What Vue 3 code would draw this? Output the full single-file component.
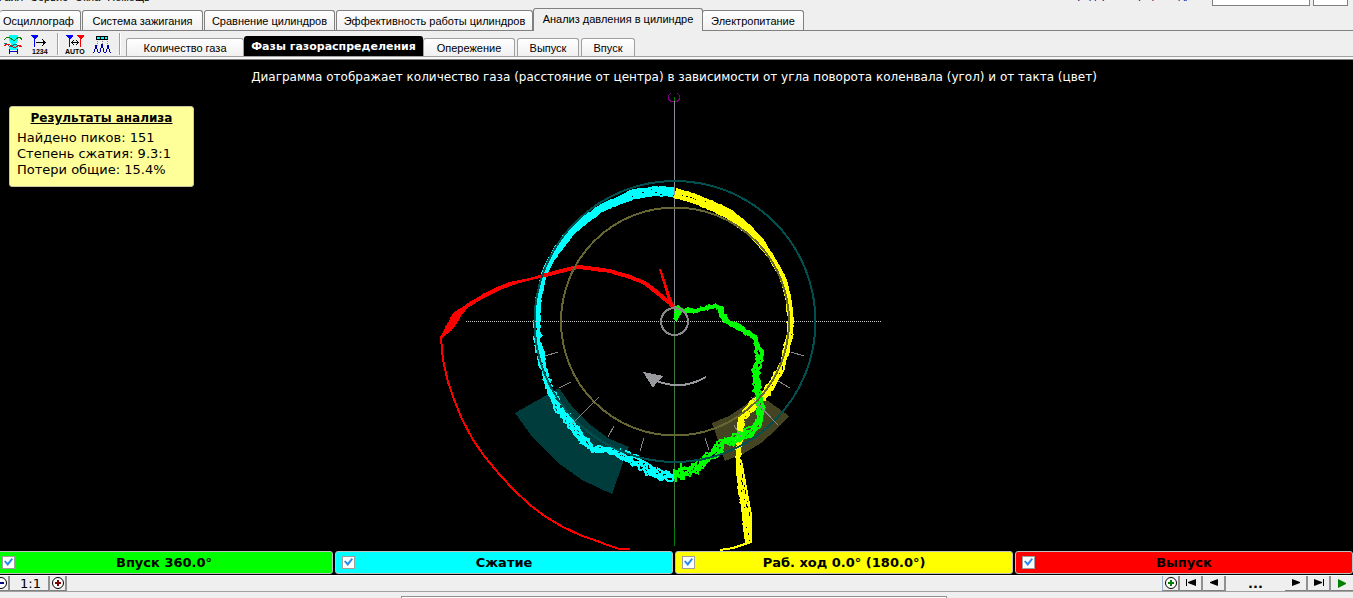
<script setup>
import { ref } from 'vue'

const mainTabs = ['Осциллограф', 'Система зажигания', 'Сравнение цилиндров', 'Эффективность работы цилиндров', 'Анализ давления в цилиндре', 'Электропитание']
const mainWidths = ['w82', 'w121', 'w131', 'w196', 'w170', 'w101']
const activeMain = ref(4)

const subTabs = ['Количество газа', 'Фазы газораспределения', 'Опережение', 'Выпуск', 'Впуск']
const subWidths = ['s118', 's179', 's92', 's62', 's53']
const activeSub = ref(1)

const strokes = ref([
  { id: 'intake', label: 'Впуск 360.0°', on: true },
  { id: 'compression', label: 'Сжатие', on: true },
  { id: 'power', label: 'Раб. ход 0.0° (180.0°)', on: true },
  { id: 'exhaust', label: 'Выпуск', on: true },
])

// Mean curve of each stroke: x, y and half-width of the bundle of cycles
const curves = {
  compression: [[674, 192, 5], [655, 191, 5], [635, 194, 5], [617, 201, 4], [600, 209, 4], [585, 220, 4], [570, 233, 4], [557, 250, 4], [549, 263, 3], [543, 277, 3], [539, 295, 3], [537, 320, 3], [538, 342, 3], [541, 357, 3], [545, 373, 3], [551, 392, 3], [558, 407, 4], [570, 422, 4], [581, 438, 4], [592, 449, 3], [607, 450, 3], [627, 457, 4], [643, 465, 5], [657, 475, 5], [674, 477, 4]],
  power: [[675, 193, 5], [693, 198, 5], [710, 205, 5], [727, 213, 5], [743, 225, 5], [760, 241, 4], [773, 260, 3], [783, 278, 3], [788, 297, 3], [791, 320, 3], [789, 340, 3], [784, 360, 3], [775, 380, 4], [765, 395, 4], [753, 405, 4], [742, 418, 3], [739, 440, 3], [738, 463, 2], [741, 487, 3], [746, 517, 4], [748, 542, 3]],
  intake: [[676, 320, 1], [678, 309, 2], [685, 310, 2], [693, 311, 1], [715, 306, 1], [720, 308, 2], [722, 315, 2], [728, 322, 2], [740, 328, 2], [754, 337, 2], [758, 345, 3], [760, 357, 4], [756, 370, 3], [757, 390, 3], [761, 407, 3], [759, 423, 4], [750, 432, 4], [738, 438, 4], [723, 443, 4], [712, 455, 4], [703, 463, 4], [692, 470, 5], [682, 472, 5], [676, 477, 6]],
  exhaust: [[674, 307, 2], [665, 299, 2], [655, 291, 2], [645, 283, 2], [630, 277, 2], [610, 271, 2], [595, 269, 2], [578, 267, 2], [565, 270, 2], [550, 274, 2], [530, 279, 1], [510, 284, 2], [500, 288, 2], [485, 295, 2], [467, 306, 2], [457, 315, 4], [449, 328, 4], [441, 338, 0]],
}
const noise = { compression: 1.9, power: 1.4, intake: 2, exhaust: 0.4 }

function bundle(name) {
  let seed = 17
  const rnd = () => ((seed = (seed * 16807) % 2147483647) / 2147483647) * 2 - 1
  const pts = curves[name]
  return [-1, -0.6, -0.2, 0.3, 0.65, 1].map((k) => {
    const out = []
    for (let i = 0; i < pts.length - 1; i++) {
      const [x1, y1, a] = pts[i]
      const [x2, y2, b] = pts[i + 1]
      const len = Math.hypot(x2 - x1, y2 - y1)
      const n = Math.max(1, Math.round(len / 3))
      for (let j = 0; j < n; j++) {
        const t = j / n
        const w = Math.max(0, a + (b - a) * t - 1)
        const smooth = y1 < 300 && name !== 'intake' ? 0.3 : 1
        const rough = noise[name] * smooth * (w > 2.5 && y1 > 430 ? 1.4 : 1)
        const d = w * k + rnd() * rough
        out.push(`${(x1 + (x2 - x1) * t - ((y2 - y1) / len) * d).toFixed(1)},${(y1 + (y2 - y1) * t + ((x2 - x1) / len) * d).toFixed(1)}`)
      }
    }
    const last = pts[pts.length - 1]
    out.push(`${last[0]},${last[1] + (last[2] - 1) * k}`)
    return out.join(' ')
  })
}
const bundles = Object.keys(curves).map((name) => ({ name, lines: bundle(name) }))
const isOn = (id) => strokes.value.find((s) => s.id === id).on
</script>

<template>
  <div class="app">
    <header class="menu">
      <nav class="menu-items">
        <a href="#">Файл</a><a href="#">Сервис</a><a href="#">Окна</a><a href="#">Помощь</a>
      </nav>
      <span class="menu-note">предпросмотр цилиндр</span>
      <input class="field wide" aria-label="Параметр" />
      <input class="field small" aria-label="Номер" />
    </header>

    <nav class="tabs">
      <button v-for="(t, i) in mainTabs" :key="t" :class="['tab', mainWidths[i], { active: i === activeMain }]" @click="activeMain = i">{{ t }}</button>
    </nav>

    <div class="toolbar">
      <button class="tool" aria-label="Фазы">
        <svg width="20" height="20" viewBox="0 0 20 20" shape-rendering="crispEdges" fill="none">
          <path d="M6 0h9v5l-2 4 2 3v3H6v-3l2-3-2-4z" fill="#0ff" />
          <path d="M1 5l3-3h2l4 3h2l4-3h1l2 3" stroke="#008000" />
          <path d="M1 8h2l3 3h3l3-2 4 2h3" stroke="#008080" />
          <path d="M1 11l3-2 3 1 3 2h3l3-2 3 2" stroke="red" />
          <path d="M6 16.500h9M6.500 14v5M14.500 14v5" stroke="#00c" />
        </svg>
      </button>
      <button class="tool" aria-label="Нумерация">
        <svg width="20" height="20" viewBox="0 0 20 20" shape-rendering="crispEdges">
          <path d="M1 0h7v1L5 4v8H4V4L1 1z" fill="#00f" />
          <path d="M6 7.500h9M12 4l3 3.500-3 3.500" stroke="#000" fill="none" />
          <text x="2" y="19" class="glyph">1234</text>
        </svg>
      </button>
      <span class="sep"></span>
      <button class="tool" aria-label="Авто">
        <svg width="20" height="20" viewBox="0 0 20 20" shape-rendering="crispEdges">
          <path d="M1 0h7v1L5 4v8H4V4L1 1z" fill="#00f" />
          <path d="M12 0h7v1l-3 3v8h-1V4l-3-3z" fill="red" />
          <path d="M7 7.500h6M9 5L6.500 7.500 9 10M11 5l2.500 2.500L11 10" stroke="#000" fill="none" />
          <text x="0" y="19" class="glyph">AUTO</text>
        </svg>
      </button>
      <button class="tool" aria-label="Пики">
        <svg width="20" height="20" viewBox="0 0 20 20" shape-rendering="crispEdges" fill="none">
          <path d="M4.500 1.500h11v3h-11z" fill="#0ff" stroke="#000" />
          <path d="M8.500 2v3M12.500 2v3" stroke="#000" />
          <path d="M5.500 6v6M10.500 6v6M15.500 6v6" stroke="#888" stroke-dasharray="1 1" />
          <path d="M1 17h1l1-3 1-4 1 4 1 3h2l1-4 1-4 1 4 1 4h2l1-3 1-4 1 4 1 3h1" stroke="#00a" />
        </svg>
      </button>
      <span class="sep"></span>
      <nav class="subtabs">
        <button v-for="(t, i) in subTabs" :key="t" :class="['subtab', subWidths[i], { active: i === activeSub }]" @click="activeSub = i">{{ t }}</button>
      </nav>
    </div>
    <div class="edge"></div>

    <main class="stage">
      <h1 class="title">Диаграмма отображает количество газа (расстояние от центра) в зависимости от угла поворота коленвала (угол) и от такта (цвет)</h1>
      <section class="results">
        <h2>Результаты анализа</h2>
        <p>Найдено пиков: 151</p>
        <p>Степень сжатия: 9.3:1</p>
        <p>Потери общие: 15.4%</p>
      </section>

      <svg class="chart" viewBox="0 60 1353 491" role="img" aria-label="Диаграмма фаз газораспределения" shape-rendering="crispEdges" fill="none">
        <path d="M559 388L515 413 533 438 557 462 582 480 612 494 624 460 629 447 608 438 588 423 573 408z" fill="#003c3c" />
        <path d="M757 393L789 416 776 430 761 443 743 454 725 461 712 423 729 416 744 406z" fill="#444422" />

        <path d="M674.500 100V320" stroke="#8c8c96" />
        <path d="M674.500 321V528" stroke="#3c783c" />
        <path d="M674.500 528V546M674.500 97v4" stroke="#008000" />
        <path d="M466 321.500H882" stroke="#c8c8c8" stroke-dasharray="1 1" />
        <path d="M670.500 93l-2 3v3l2 2h3M677.500 93l2 3v3l-2 2h-3" stroke="#800080" />

        <template v-for="b in bundles" :key="b.name">
          <g v-if="isOn(b.name)" :class="['trace', b.name]">
            <polyline v-for="(l, i) in b.lines" :key="i" :points="l" />
          </g>
        </template>
        <path v-if="isOn('power')" d="M737 460L746 543M741 460L751 515 751 542 742 545 733 548 720 550" stroke="#ff0" stroke-width="2" />
        <path v-if="isOn('exhaust')" d="M660 269L667 290 673 306M660 269L670 303M441 338L443 360 448 382 455 402 462 419 473 440 485 457 500 475 514 490 530 505 546 517 563 527 580 535 597 541 610 546 620 549H630" stroke="red" stroke-width="2" />
        <path v-if="isOn('intake')" d="M675 320L676 307 679 308 677 318 682 311M681 472V462" stroke="#0f0" stroke-width="2" />

        <circle cx="675" cy="321.500" r="140.500" stroke="#005050" stroke-width="2" />
        <circle cx="675" cy="321.500" r="114" stroke="#666633" stroke-width="2" />
        <circle cx="674.500" cy="321.500" r="13.500" stroke="#888" stroke-width="2" />
        <path d="M545 356L558 352M559 388L571 382M572 424L599 397M608 437L614 426M640 451L644 438M791 352L804 356M778 381L790 388M751 397L778 425M734 425L741 437M705 438L709 450" stroke="#888" />
        <path d="M643 372L663 376 658 381 653 388z" fill="#999a9e" />
        <path d="M657 381Q682 391 706 377" stroke="#999a9e" stroke-width="2" />
      </svg>
    </main>

    <div class="legend">
      <label v-for="s in strokes" :key="s.id" :class="['stroke', s.id]">
        <input v-model="s.on" type="checkbox" />
        <span>{{ s.label }}</span>
      </label>
    </div>

    <footer class="controls">
      <div class="zoom">
        <button class="btn minus" aria-label="Уменьшить">
          <svg width="14" height="14" viewBox="0 0 14 14"><circle cx="7" cy="7" r="5.500" fill="#fff" stroke="#000" /><path d="M4 7h6" stroke="#008" stroke-width="2" /></svg>
        </button>
        <button class="btn ratio">1:1</button>
        <button class="btn plus" aria-label="Увеличить">
          <svg width="14" height="14" viewBox="0 0 14 14"><circle cx="7" cy="7" r="5.500" fill="#fff" stroke="#000" /><path d="M4 7h6M7 4v6" stroke="#800000" stroke-width="2" /></svg>
        </button>
      </div>
      <div class="player">
        <button class="btn add" aria-label="Добавить">
          <svg width="14" height="14" viewBox="0 0 14 14"><circle cx="7" cy="7" r="5.500" fill="#fff" stroke="#000" /><path d="M4 7h6M7 4v6" stroke="#008000" stroke-width="2" /></svg>
        </button>
        <button class="btn step" aria-label="В начало"><svg width="12" height="8" viewBox="0 0 12 8"><path d="M1 0h1v7H1zM11 0v7L3 4V3z" /></svg></button>
        <button class="btn step" aria-label="Назад"><svg width="12" height="8" viewBox="0 0 12 8"><path d="M10 0v7L2 4V3z" /></svg></button>
        <span class="pos">...</span>
        <button class="btn step" aria-label="Вперёд"><svg width="12" height="8" viewBox="0 0 12 8"><path d="M2 0v7l8-3V3z" /></svg></button>
        <button class="btn step" aria-label="В конец"><svg width="12" height="8" viewBox="0 0 12 8"><path d="M10 0h1v7h-1zM1 0v7l8-3V3z" /></svg></button>
        <button class="btn play" aria-label="Пуск"><svg width="10" height="9" viewBox="0 0 10 9"><path d="M1 0v9l8-4V4z" fill="#008000" /></svg></button>
      </div>
    </footer>
    <div class="status"><span class="panel"></span></div>
  </div>
</template>

<style>
html, body { background: #efefef; }
</style>

<style scoped>
.app {
  display: flex;
  flex-direction: column;
  height: 100vh;
  overflow: hidden;
  background: #efefef;
  color: #000;
  font: 11px/16px "Liberation Sans", Arial, sans-serif;
}
.app * { box-sizing: border-box; }
button { margin: 0; padding: 0; border: 0; background: none; font: inherit; color: inherit; }

.menu { display: flex; flex: none; align-items: flex-end; height: 8px; }
.menu-items { display: flex; flex: 1; gap: 7px; height: 16px; margin-bottom: 3px; margin-left: -4px; }
.menu-items a { color: #000; text-decoration: none; }
.menu-note { height: 16px; margin: 0 18px 5px 0; color: #000080; }
.field { height: 22px; margin: 0 0 2px 3px; padding: 0; border: 1px solid #808080; background: #fff; }
.wide { width: 98px; }
.small { width: 35px; margin-right: 5px; }

.tabs { display: flex; flex: none; align-items: flex-end; height: 23px; border-bottom: 1px solid #808080; }
.tab {
  flex: none;
  height: 20px;
  margin-right: 1px;
  border: 1px solid #808080;
  border-bottom: 0;
  border-radius: 3px 3px 0 0;
  background: linear-gradient(#fff, #f0f0f0);
  white-space: nowrap;
}
.tab:first-child { border-left: 0; text-align: left; padding-left: 3px; }
.tab.active { height: 23px; margin: 0 -1px -1px -1px; background: #efefef; padding-bottom: 3px; }
.w82 { width: 81px; }
.w121 { width: 121px; }
.w131 { width: 131px; }
.w196 { width: 197px; }
.w170 { width: 170px; }
.w101 { width: 102px; }

.toolbar { display: flex; flex: none; height: 26px; border-bottom: 1px solid #a0a0a0; }
.edge { flex: none; height: 3px; border-bottom: 1px solid #808080; background: #f8f8f8; }
.tool { flex: none; width: 20px; height: 20px; margin: 4px 0 0 3px; }
.tool svg { display: block; }
.tool + .tool { margin-left: 7px; }
.glyph { font: bold 7px "Liberation Sans", Arial, sans-serif; }
.sep { width: 2px; height: 22px; margin: 2px 3px 0 7px; border-left: 1px solid #a0a0a0; border-right: 1px solid #fff; }
.subtabs { display: flex; flex: 1; align-items: flex-end; padding-left: 2px; }
.subtab {
  flex: none;
  height: 18px;
  margin-right: 2px;
  border: 1px solid #a0a0a0;
  border-bottom: 0;
  border-radius: 3px 3px 0 0;
  background: linear-gradient(#fff, #f0f0f0);
  white-space: nowrap;
}
.subtab.active { height: 20px; margin: 0 0 0 -2px; background: #000; border-color: #000; color: #fff; font: bold 11px/16px "DejaVu Sans", sans-serif; }
.s118 { width: 118px; }
.s179 { width: 179px; }
.s92 { width: 92px; }
.s62 { width: 62px; }
.s53 { width: 54px; }

.stage { position: relative; flex: 1; min-height: 0; overflow: hidden; background: #000; font: 13px/16px "DejaVu Sans", Verdana, sans-serif; }
.chart { display: block; width: 100%; height: 100%; }
.title { position: absolute; top: 9px; left: 0; right: 5px; margin: 0; color: #fff; font-size: 12px; font-weight: normal; text-align: center; }
.results { position: absolute; top: 46px; left: 9px; width: 185px; padding: 3px 7px 8px; border: 1px solid #c8c8a0; border-radius: 3px; background: #ffff99; }
.results h2 { margin: 0 0 4px; font-size: 12px; text-align: center; text-decoration: underline; }
.results p { margin: 0; }

.trace { stroke-width: 2; }
.compression { stroke: #0ff; }
.power { stroke: #ff0; }
.intake { stroke: #0f0; }
.exhaust { stroke: #f00; }

.legend { display: grid; flex: none; grid-template-columns: repeat(4, 1fr); gap: 2px; height: 24px; margin-left: -5px; padding-bottom: 1px; background: #000; }
.stroke { display: flex; align-items: center; padding: 0 6px; border: 1px solid #c0c0c0; border-radius: 3px; font: bold 13px/16px "DejaVu Sans", Verdana, sans-serif; }
.stroke span { flex: 1; margin-right: 13px; text-align: center; }
.stroke input { width: 13px; height: 13px; margin: 0; appearance: none; border: 1px solid #a0a0a0; background: #fff; }
.stroke input:checked::before { content: ""; display: block; width: 9px; height: 8px; margin: 1px; background: #2a8cf0; clip-path: polygon(0 45%, 15% 30%, 40% 60%, 85% 0, 100% 15%, 42% 100%); }
label.intake { background: #0f0; }
label.compression { background: #0ff; }
label.power { background: #ff0; }
label.exhaust { background: #f00; }

.controls { display: flex; flex: none; justify-content: space-between; height: 17px; border-top: 1px solid #fff; border-bottom: 1px solid #a0a0a0; }
.zoom, .player { display: flex; height: 15px; }
.btn { display: flex; align-items: center; justify-content: center; border-right: 2px solid #909090; border-bottom: 1px solid #808080; }
.minus { width: 10px; justify-content: flex-end; overflow: hidden; }
.minus svg { flex: none; }
.ratio { width: 40px; padding-left: 3px; font: 13px/15px "DejaVu Sans", Verdana, sans-serif; }
.plus { width: 17px; }
.add { width: 18px; border-left: 1px solid #99b4d1; }
.step { width: 23px; }
.pos { width: 59px; font: bold 13px/15px "DejaVu Sans", Verdana, sans-serif; text-align: center; }
.play { width: 22px; border-right: 0; }

.status { display: flex; flex: none; align-items: flex-end; justify-content: center; height: 6px; padding-right: 5px; }
.panel { width: 546px; height: 2px; border: 1px solid #909090; border-bottom: 0; background: #fff; }
</style>
